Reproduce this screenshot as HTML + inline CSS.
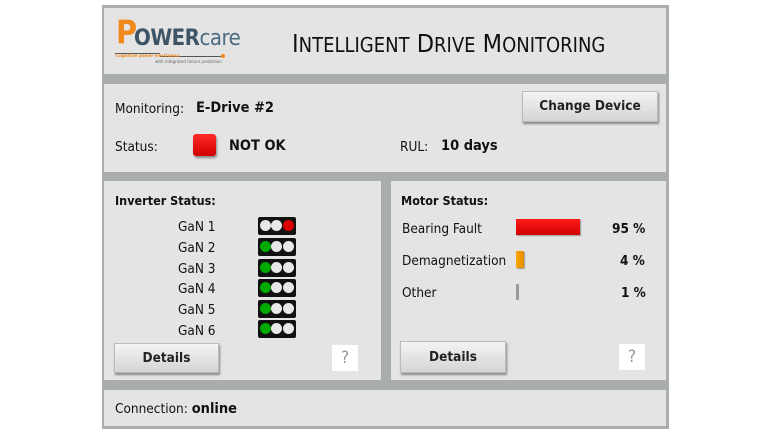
<!DOCTYPE html>
<html><head><meta charset="utf-8"><style>
*{margin:0;padding:0;box-sizing:border-box}
body{width:768px;height:432px;background:#fff;font-family:"DejaVu Sans Condensed","Liberation Sans",sans-serif;position:relative;overflow:hidden;color:#111}
.a{position:absolute}
.frame{left:102px;top:5px;width:567px;height:424px;background:#a9aeac}
.p{position:absolute;background:#e4e4e4}
.btn{position:absolute;background:linear-gradient(#f4f4f4,#d4d4d4);border:1px solid #bbb;box-shadow:1px 2px 2px #888;font-size:13.5px;font-weight:bold;text-align:center;color:#222}
.t{font-size:13.5px;position:absolute;white-space:nowrap}
.b{font-weight:bold}
.tl{position:absolute;left:258px;width:38px;height:18px;background:#111;border-radius:2px}
.tl i{position:absolute;top:3px;width:11px;height:11px;border-radius:50%;background:#e8e8e8}
.q{position:absolute;width:26px;height:26px;background:#fff;color:#999;font-size:17px;text-align:center;line-height:26px}
</style></head><body>
<div class="a frame"></div>
<div class="p" style="left:104px;top:8px;width:562px;height:66px"></div>
<div class="p" style="left:104px;top:84px;width:562px;height:88px"></div>
<div class="p" style="left:104px;top:181px;width:277px;height:199px"></div>
<div class="p" style="left:391px;top:181px;width:275px;height:199px"></div>
<div class="p" style="left:104px;top:390px;width:562px;height:36px"></div>

<!-- logo -->
<div class="t" style="left:116px;top:13px;font-size:32px;color:#f08a1c;font-weight:bold;font-family:'DejaVu Sans Condensed',sans-serif">P</div>
<div class="t" style="left:134px;top:26px;font-size:22px;color:#3d5566;font-weight:bold;letter-spacing:-0.5px;font-family:'DejaVu Sans Condensed',sans-serif">OWER<span style="font-weight:normal;color:#4b6c80">care</span></div>
<div class="a" style="left:115px;top:53px;width:45px;height:1px;background:#555"></div>
<div class="a" style="left:160px;top:56px;width:62px;height:1px;background:#555"></div>
<div class="a" style="left:221px;top:54px;width:4px;height:4px;border-radius:50%;background:#f08a1c"></div>
<div class="t" style="left:116px;top:54px;font-size:4.5px;color:#f08a1c;font-weight:bold">Cognitive power electronics</div>
<div class="t" style="left:155px;top:60px;font-size:4.5px;color:#666">with integrated failure prediction</div>

<div class="t" style="left:292px;top:29px;font-size:25px;color:#111;font-family:'DejaVu Sans Condensed',sans-serif">I<span style="font-size:20px">NTELLIGENT</span> D<span style="font-size:20px">RIVE</span> M<span style="font-size:20px">ONITORING</span></div>

<div class="t" style="left:115px;top:101px">Monitoring:</div>
<div class="t b" style="left:196px;top:100px;font-size:14.5px">E-Drive #2</div>
<div class="btn" style="left:522px;top:91px;width:136px;height:31px;line-height:29px">Change Device</div>
<div class="t" style="left:115px;top:139px">Status:</div>
<div class="a" style="left:193px;top:134px;width:23px;height:22px;border-radius:3px;background:linear-gradient(#ff2a2a,#d00000);box-shadow:1px 2px 2px #888"></div>
<div class="t b" style="left:229px;top:138px;font-size:14.5px">NOT OK</div>
<div class="t" style="left:400px;top:139px">RUL:</div>
<div class="t b" style="left:441px;top:138px;font-size:14.5px">10 days</div>

<div class="t b" style="left:115px;top:193px;font-size:12.5px">Inverter Status:</div>
<div class="t" style="left:178px;top:219px">GaN 1</div>
<div class="t" style="left:178px;top:240px">GaN 2</div>
<div class="t" style="left:178px;top:261px">GaN 3</div>
<div class="t" style="left:178px;top:281px">GaN 4</div>
<div class="t" style="left:178px;top:302px">GaN 5</div>
<div class="t" style="left:178px;top:323px">GaN 6</div>
<div class="tl" style="top:217px"><i style="left:2px"></i><i style="left:13px"></i><i style="left:25px;background:#d00"></i></div>
<div class="tl" style="top:238px"><i style="left:2px;background:#0a0"></i><i style="left:13px"></i><i style="left:25px"></i></div>
<div class="tl" style="top:259px"><i style="left:2px;background:#0a0"></i><i style="left:13px"></i><i style="left:25px"></i></div>
<div class="tl" style="top:279px"><i style="left:2px;background:#0a0"></i><i style="left:13px"></i><i style="left:25px"></i></div>
<div class="tl" style="top:300px"><i style="left:2px;background:#0a0"></i><i style="left:13px"></i><i style="left:25px"></i></div>
<div class="tl" style="top:320px"><i style="left:2px;background:#0a0"></i><i style="left:13px"></i><i style="left:25px"></i></div>
<div class="btn" style="left:114px;top:343px;width:105px;height:30px;line-height:28px">Details</div>
<div class="q" style="left:332px;top:345px">?</div>

<div class="t b" style="left:401px;top:193px;font-size:12.5px">Motor Status:</div>
<div class="t" style="left:402px;top:221px">Bearing Fault</div>
<div class="t" style="left:402px;top:253px">Demagnetization</div>
<div class="t" style="left:402px;top:285px">Other</div>
<div class="a" style="left:516px;top:219px;width:64px;height:16px;background:linear-gradient(#ff1a1a,#d00000);box-shadow:1px 1px 1px #999"></div>
<div class="a" style="left:516px;top:251px;width:8px;height:17px;background:linear-gradient(90deg,#f9a800,#e58a00);border-radius:1px;box-shadow:1px 1px 1px #999"></div>
<div class="a" style="left:516px;top:284px;width:3px;height:16px;background:#999;border-radius:1px"></div>
<div class="t b" style="left:612px;top:221px">95 %</div>
<div class="t b" style="left:620px;top:253px">4 %</div>
<div class="t b" style="left:621px;top:285px">1 %</div>
<div class="btn" style="left:400px;top:341px;width:106px;height:32px;line-height:31px">Details</div>
<div class="q" style="left:619px;top:344px">?</div>

<div class="t" style="left:115px;top:401px">Connection: <b style="font-size:14.5px">online</b></div>
</body></html>
